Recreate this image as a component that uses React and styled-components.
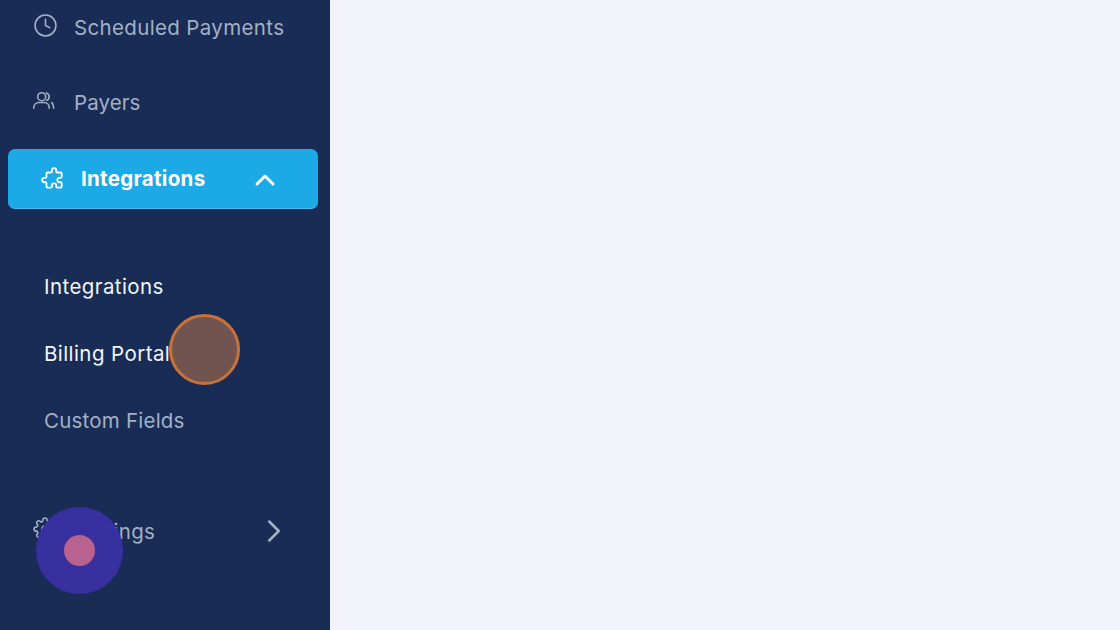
import React from "react";
import styled, { createGlobalStyle } from "styled-components";
import { FiClock, FiSettings } from "react-icons/fi";
import { HiOutlinePuzzle } from "react-icons/hi";
import { ChevronUp, ChevronRight } from "lucide-react";

const Global = createGlobalStyle`
  html, body { margin: 0; padding: 0; height: 100%; overflow: hidden; background: #f2f3f8; }
  * { box-sizing: border-box; }
`;
const Page = styled.div`
  position: relative;
  display: flex;
  width: 1120px;
  height: 630px;
  overflow: hidden;
  background: #f2f3f8;
  font-family: Inter, "Open Sans", "Liberation Sans", sans-serif;
`;
const Sidebar = styled.nav`
  display: flex;
  flex-direction: column;
  flex: 0 0 330px;
  height: 100%;
  padding: 0 12px 0 8px;
  background: #182c56;
  overflow: hidden;
`;
const List = styled.div`
  display: flex;
  flex-direction: column;
  gap: 16px;
  margin-top: -3px;
`;
const Row = styled.div`
  display: flex;
  align-items: center;
  height: 60px;
  padding-left: 25px;
  color: #a4b0c4;
  font-size: 20.5px;
  letter-spacing: 0.35px;
`;
const Glyph = styled.span`
  display: flex;
  flex: 0 0 auto;
  margin-bottom: ${p => p.$lift || 0}px;
`;
const Label = styled.span`
  margin-left: ${p => p.$gap}px;
  margin-bottom: ${p => p.$lift || 0}px;
  letter-spacing: ${p => p.$track ?? 0.35}px;
`;
const ActiveRow = styled(Row)`
  padding-left: 32px;
  border-radius: 7px;
  background: #1caae6;
  border-bottom: 1px solid #46bdf0;
  color: #fff;
  font-weight: 700;
`;
const Trail = styled.span`
  display: flex;
  margin-left: auto;
  margin-right: ${p => p.$right}px;
  margin-top: ${p => p.$drop || 0}px;
`;
const SubMenu = styled.div`
  display: flex;
  flex-direction: column;
  margin: 44px 0 47px;
`;
const SubItem = styled.div`
  display: flex;
  align-items: center;
  height: 67px;
  padding-left: 36px;
  font-size: 20.5px;
  letter-spacing: ${p => (p.$dim ? 0.22 : 0.42)}px;
  color: ${p => (p.$dim ? "#a4b0c4" : "#f2f5f9")};
`;
const Cursor = styled.div`
  position: absolute;
  left: 169px;
  top: 314px;
  width: 71px;
  height: 71px;
  border-radius: 50%;
  border: 3px solid #c8723a;
  background: #715450;
`;
const Pulse = styled.div`
  position: absolute;
  left: 36px;
  top: 507px;
  width: 87px;
  height: 87px;
  border-radius: 50%;
  background: #38309f;
  display: flex;
  align-items: center;
  justify-content: center;
`;
const PulseDot = styled.div`
  width: 31px;
  height: 31px;
  border-radius: 50%;
  background: #b9618f;
`;

const PayersIcon = () => (
  <svg width="24" height="24" viewBox="0 0 24 24" fill="none" stroke="currentColor" strokeWidth="1.6" strokeLinecap="round" strokeLinejoin="round">
    <circle cx="8.7" cy="7.7" r="4" />
    <path d="M0.8 19.2v-.7c0-3 2.6-5 5.6-5h4.4c3 0 5.4 2 5.4 5v.7" />
    <path d="M13.4 3.9a4 4 0 0 1 0 7.6" />
    <path d="M18.8 13.6c1.1 1 1.8 2.6 1.8 4.9v.7" />
  </svg>
);

export default function App() {
  return (
    <Page>
      <Global />
      <Sidebar>
        <List>
          <Row>
            <Glyph $lift={4}><FiClock size={25} strokeWidth={1.5} /></Glyph>
            <Label $gap={16}>Scheduled Payments</Label>
          </Row>
          <Row>
            <Glyph $lift={4}><PayersIcon /></Glyph>
            <Label $gap={17} $lift={2} $track={0.1}>Payers</Label>
          </Row>
          <ActiveRow>
            <Glyph><HiOutlinePuzzle size={26} strokeWidth={1.7} /></Glyph>
            <Label $gap={15} $track={0.3}>Integrations</Label>
            <Trail $right={37} $drop={2}><ChevronUp size={32} strokeWidth={2.2} /></Trail>
          </ActiveRow>
        </List>
        <SubMenu>
          <SubItem>Integrations</SubItem>
          <SubItem>Billing Portal</SubItem>
          <SubItem $dim>Custom Fields</SubItem>
        </SubMenu>
        <Row>
          <Glyph $lift={4}><FiSettings size={24} strokeWidth={1.6} /></Glyph>
          <Label $gap={17}>Settings</Label>
          <Trail $right={25}><ChevronRight size={38} strokeWidth={1.6} /></Trail>
        </Row>
      </Sidebar>
      <Cursor />
      <Pulse><PulseDot /></Pulse>
    </Page>
  );
}
